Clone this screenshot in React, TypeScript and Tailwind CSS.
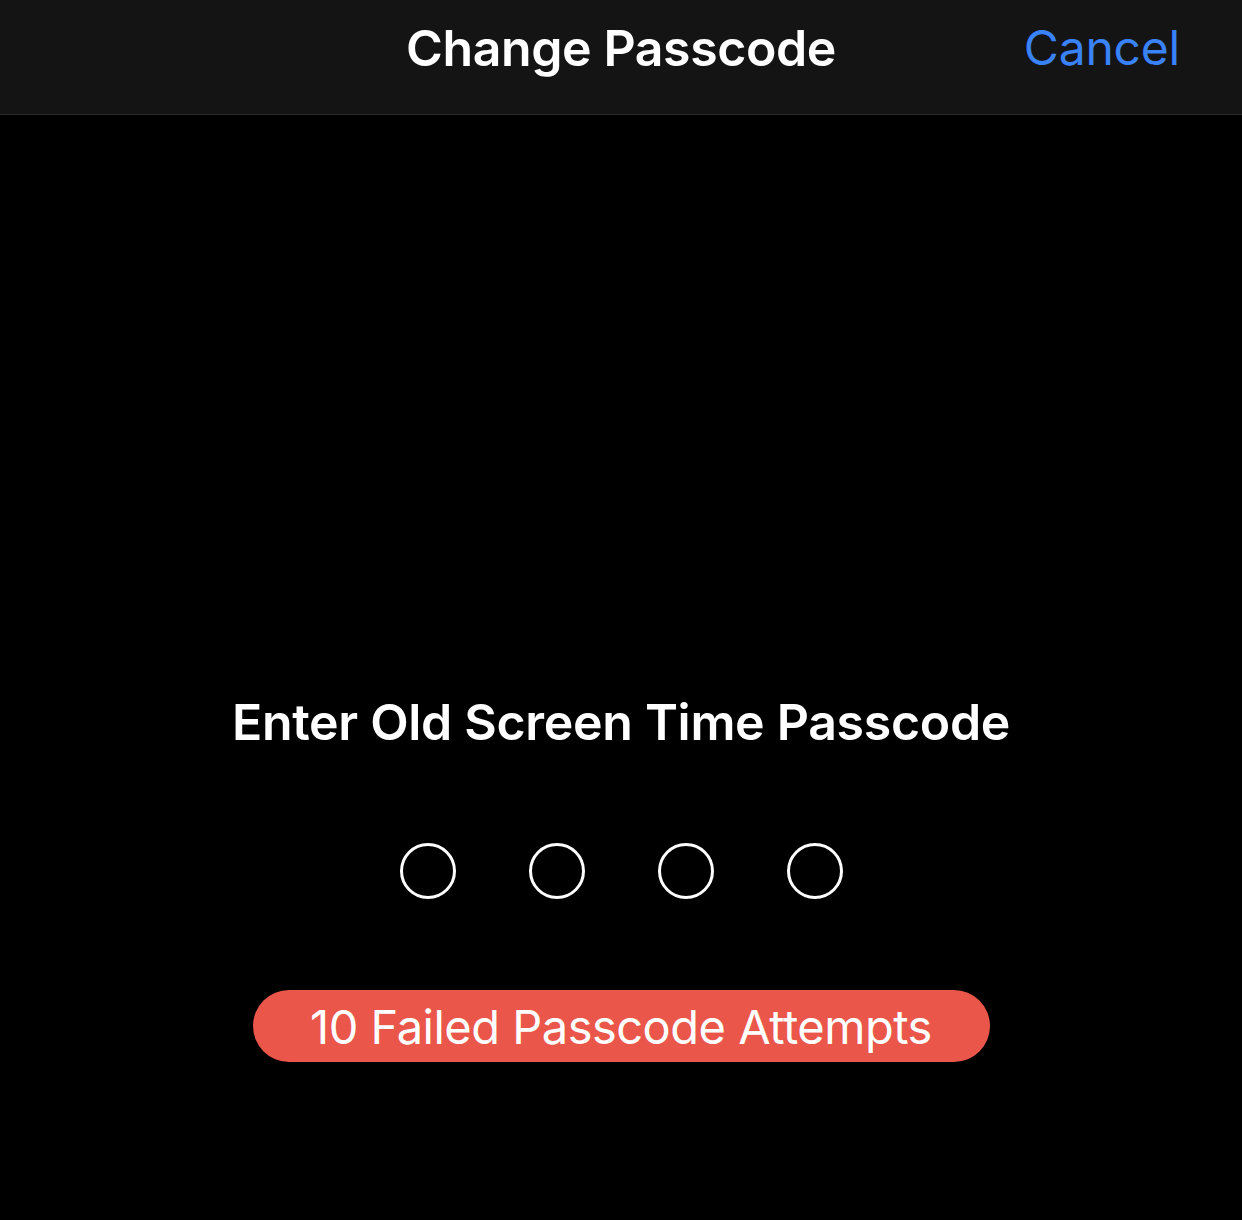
export default function App() {
  const dots = [0, 1, 2, 3];
  return (
    <div
      className="w-[1242px] h-[1220px] bg-black text-white flex flex-col"
      style={{ fontFamily: "Inter, 'Noto Sans', sans-serif" }}
    >
      <header className="h-[115px] shrink-0 bg-[#141414] border-b border-[#2a2a2a] grid grid-cols-[1fr_auto_1fr] items-center px-[62px]">
        <div />
        <h1 className="text-[50px] font-semibold tracking-[-0.4px] leading-none pb-[18px]">
          Change Passcode
        </h1>
        <div className="flex justify-end">
          <button className="text-[48px] text-[#3a82f7] leading-none pb-[18px] tracking-[-0.2px]">
            Cancel
          </button>
        </div>
      </header>

      <main className="flex flex-col items-center pt-[582px]">
        <h2 className="text-[50px] font-semibold leading-none tracking-[-0.3px]">
          Enter Old Screen Time Passcode
        </h2>
        <div className="flex gap-[73px] mt-[96px]">
          {dots.map((d) => (
            <span
              key={d}
              className="w-[56px] h-[56px] rounded-full border-[3px] border-white"
            />
          ))}
        </div>
        <div className="mt-[91px] w-[737px] h-[72px] rounded-full bg-[#ea564a] flex items-center justify-center">
          <span className="text-[47px] leading-none tracking-[-0.5px]">
            10 Failed Passcode Attempts
          </span>
        </div>
      </main>
    </div>
  );
}
